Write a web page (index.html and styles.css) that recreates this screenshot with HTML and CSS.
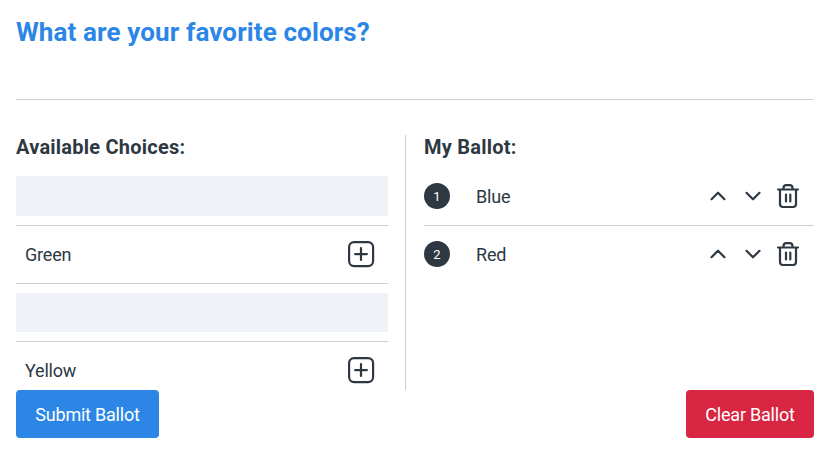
FILE: index.html
```html
<!DOCTYPE html>
<html lang="en">
<head>
<meta charset="utf-8">
<title>Ballot</title>
<link rel="stylesheet" href="styles.css">
</head>
<body>
<svg width="0" height="0" class="sprite" aria-hidden="true">
  <symbol id="plus" viewBox="0 0 28 28"><rect x="2.100" y="2.100" width="24" height="24" rx="5"/><path d="M14 8.200v11.800M8.100 14.100h11.800"/></symbol>
  <symbol id="up" viewBox="0 0 20 20"><path d="M3.500 13.200l6.500-6.500 6.500 6.500"/></symbol>
  <symbol id="down" viewBox="0 0 20 20"><path d="M3.500 6.800l6.500 6.500 6.500-6.500"/></symbol>
  <symbol id="trash" viewBox="0 0 24 26"><path d="M2 6.500h20M4 6.500v14.500q0 3 3 3h10q3 0 3-3v-14.500M7.500 6V5Q7.500 2.200 10.300 2.200h3.400q2.800 0 2.800 2.800V6M10 11.500v7M14.300 11.500v7"/></symbol>
</svg>
<main class="poll">
  <h1 class="title">What are your favorite colors?</h1>
  <div class="columns">
    <section class="choices">
      <h2 class="heading">Available Choices:</h2>
      <ul class="list">
        <li class="row"><div class="slot"></div></li>
        <li class="row choice"><span class="label">Green</span><svg class="icon plus"><use href="#plus"/></svg></li>
        <li class="row"><div class="slot"></div></li>
        <li class="row choice"><span class="label">Yellow</span><svg class="icon plus"><use href="#plus"/></svg></li>
      </ul>
    </section>
    <section class="ballot">
      <h2 class="heading">My Ballot:</h2>
      <ul class="list">
        <li class="row"><span class="rank">1</span><span class="label name">Blue</span><svg class="icon arrow"><use href="#up"/></svg><svg class="icon arrow"><use href="#down"/></svg><svg class="icon trash"><use href="#trash"/></svg></li>
        <li class="row"><span class="rank">2</span><span class="label name">Red</span><svg class="icon arrow"><use href="#up"/></svg><svg class="icon arrow"><use href="#down"/></svg><svg class="icon trash"><use href="#trash"/></svg></li>
      </ul>
    </section>
  </div>
  <div class="actions">
    <button class="button submit">Submit Ballot</button>
    <button class="button clear">Clear Ballot</button>
  </div>
</main>
</body>
</html>
```
FILE: styles.css
```css
* { box-sizing: border-box; }
body {
  margin: 0;
  background: #fff;
  color: #2d3842;
  font: 18px/28px Roboto, sans-serif;
}
.sprite { display: block; }
.poll { width: 798px; margin-left: 16px; }
.title {
  height: 100px;
  margin: 0;
  padding-top: 16px;
  border-bottom: 1px solid #d0d3d6;
  color: #2b86e6;
  font-size: 26px;
  line-height: 32px;
  font-weight: 700;
  letter-spacing: 0.12px;
}
.columns {
  display: grid;
  grid-template-columns: 390px 408px;
  grid-template-rows: 255px;
  height: 255px;
  margin-top: 35px;
}
.choices { padding-right: 17px; border-right: 1px solid #cbd0d6; }
.ballot { padding-left: 18px; }
.heading {
  height: 32px;
  margin: 0;
  font-size: 20px;
  line-height: 24px;
  font-weight: 700;
  letter-spacing: 0.23px;
}
.list { margin: 0; padding: 0; list-style: none; }
.row {
  display: flex;
  align-items: center;
  height: 58px;
}
.row + .row { padding-bottom: 1px; border-top: 1px solid #cbd0d6; }
.slot { flex: 1; height: 40px; background: #eff3f8; }
.row + .row .slot { align-self: flex-start; height: 39px; margin-top: 9px; }
.row.choice { justify-content: space-between; padding-right: 13px; padding-left: 9px; }
.label { padding-top: 2px; letter-spacing: -0.2px; }
.rank {
  width: 26px;
  height: 26px;
  margin-right: 26px;
  border-radius: 50%;
  background: #2d3842;
  color: #fff;
  font-size: 13px;
  line-height: 27px;
  text-align: center;
}
.name { flex: 1; }
.icon {
  fill: none;
  stroke: #2d3842;
  stroke-width: 2.2;
  stroke-linecap: round;
  stroke-linejoin: round;
}
.plus { width: 28px; height: 28px; }
.arrow { width: 20px; height: 20px; margin-right: 15px; }
.arrow + .arrow { margin-right: 13px; }
.trash { width: 24px; height: 26px; margin-right: 14px; }
.actions { display: flex; justify-content: space-between; }
.button {
  height: 48px;
  padding: 2px 0 0;
  border: 0;
  border-radius: 4px;
  color: #fff;
  font: 18px/28px Roboto, sans-serif;
  letter-spacing: -0.22px;
}
.submit { width: 143px; background: #2b86e6; }
.clear { width: 128px; background: #d82642; }
```
